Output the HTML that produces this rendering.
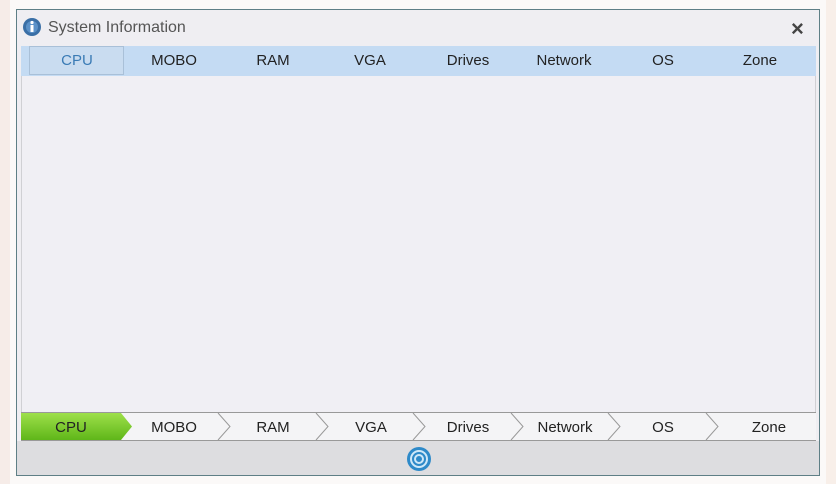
<!DOCTYPE html><html><head><style>
body{margin:0;width:836px;height:484px;background:#fbf9f8;font-family:"Liberation Sans",sans-serif;position:relative;overflow:hidden}
.win{position:absolute;left:16px;top:9px;width:804px;height:467px;background:#efeef2;border:1px solid #5e7f86;box-sizing:border-box}
.t{position:absolute;font-size:15px;color:#222}
.tabs{position:absolute;left:21px;top:46px;width:795px;height:30px;background:#c4dbf3}
.content{position:absolute;left:21px;top:76px;width:795px;height:336px;background:#f0eff4;border-left:1px solid #d0d0d4;border-right:1px solid #d0d0d4;box-sizing:border-box}
.bc{position:absolute;left:21px;top:412px;width:795px;height:29px;background:#f4f4f6;border-top:1px solid #999;border-bottom:1px solid #999;box-sizing:border-box}
.foot{position:absolute;left:17px;top:441px;width:802px;height:34px;background:#dddde0}
.l{position:absolute;font-size:15px;color:#222;transform:translateX(-50%)}
</style></head><body>
<div style="position:absolute;left:0;top:0;width:10px;height:484px;background:#f6ece8"></div>
<div style="position:absolute;right:0;top:0;width:10px;height:484px;background:#f8efe9"></div>
<div class="win"></div>
<svg style="position:absolute;left:22px;top:17px" width="20" height="20"><circle cx="10" cy="10" r="9" fill="#3a6fa6"/><circle cx="10" cy="10" r="6" fill="#5b91c8"/><rect x="8.5" y="8" width="3" height="7" fill="#fff"/><circle cx="10" cy="5.5" r="1.6" fill="#fff"/></svg>
<div class="t" style="left:48px;top:19px;color:#555;font-size:16px">System Information</div>
<div class="t" style="left:791px;top:16px;font-size:22px;color:#444;font-weight:bold">×</div>
<div class="tabs"></div>
<div style="position:absolute;left:29px;top:46px;width:95px;height:29px;background:#c9dcf0;border:1px solid #a9c0d8;box-sizing:border-box"></div>
<div class="l" style="left:77px;top:52px;color:#3a7bb5">CPU</div>
<div class="l" style="left:174px;top:52px">MOBO</div>
<div class="l" style="left:273px;top:52px">RAM</div>
<div class="l" style="left:370px;top:52px">VGA</div>
<div class="l" style="left:468px;top:52px">Drives</div>
<div class="l" style="left:564px;top:52px">Network</div>
<div class="l" style="left:663px;top:52px">OS</div>
<div class="l" style="left:760px;top:52px">Zone</div>
<div class="content"></div>
<div class="bc"></div>
<svg style="position:absolute;left:21px;top:412px" width="795" height="29">
<defs><linearGradient id="g" x1="0" y1="0" x2="0" y2="1"><stop offset="0" stop-color="#9ee04a"/><stop offset="1" stop-color="#5fb619"/></linearGradient></defs>
<polygon points="0,1 100,1 111,14.5 100,28 0,28" fill="url(#g)"/>
<g fill="none" stroke="#999" stroke-width="1">
<polyline points="197,1 209,14.5 197,28"/><polyline points="295,1 307,14.5 295,28"/><polyline points="392,1 404,14.5 392,28"/><polyline points="490,1 502,14.5 490,28"/><polyline points="587,1 599,14.5 587,28"/><polyline points="685,1 697,14.5 685,28"/></g></svg>
<div class="l" style="left:71px;top:419px">CPU</div>
<div class="l" style="left:174px;top:419px">MOBO</div>
<div class="l" style="left:273px;top:419px">RAM</div>
<div class="l" style="left:371px;top:419px">VGA</div>
<div class="l" style="left:468px;top:419px">Drives</div>
<div class="l" style="left:565px;top:419px">Network</div>
<div class="l" style="left:663px;top:419px">OS</div>
<div class="l" style="left:769px;top:419px">Zone</div>
<div class="foot"></div>
<svg style="position:absolute;left:406px;top:446px" width="26" height="26"><circle cx="13" cy="13" r="12" fill="#2e8ac9"/><circle cx="13" cy="13" r="8" fill="none" stroke="#cfe8f8" stroke-width="2"/><circle cx="13" cy="13" r="4" fill="none" stroke="#cfe8f8" stroke-width="2"/></svg>
</body></html>
